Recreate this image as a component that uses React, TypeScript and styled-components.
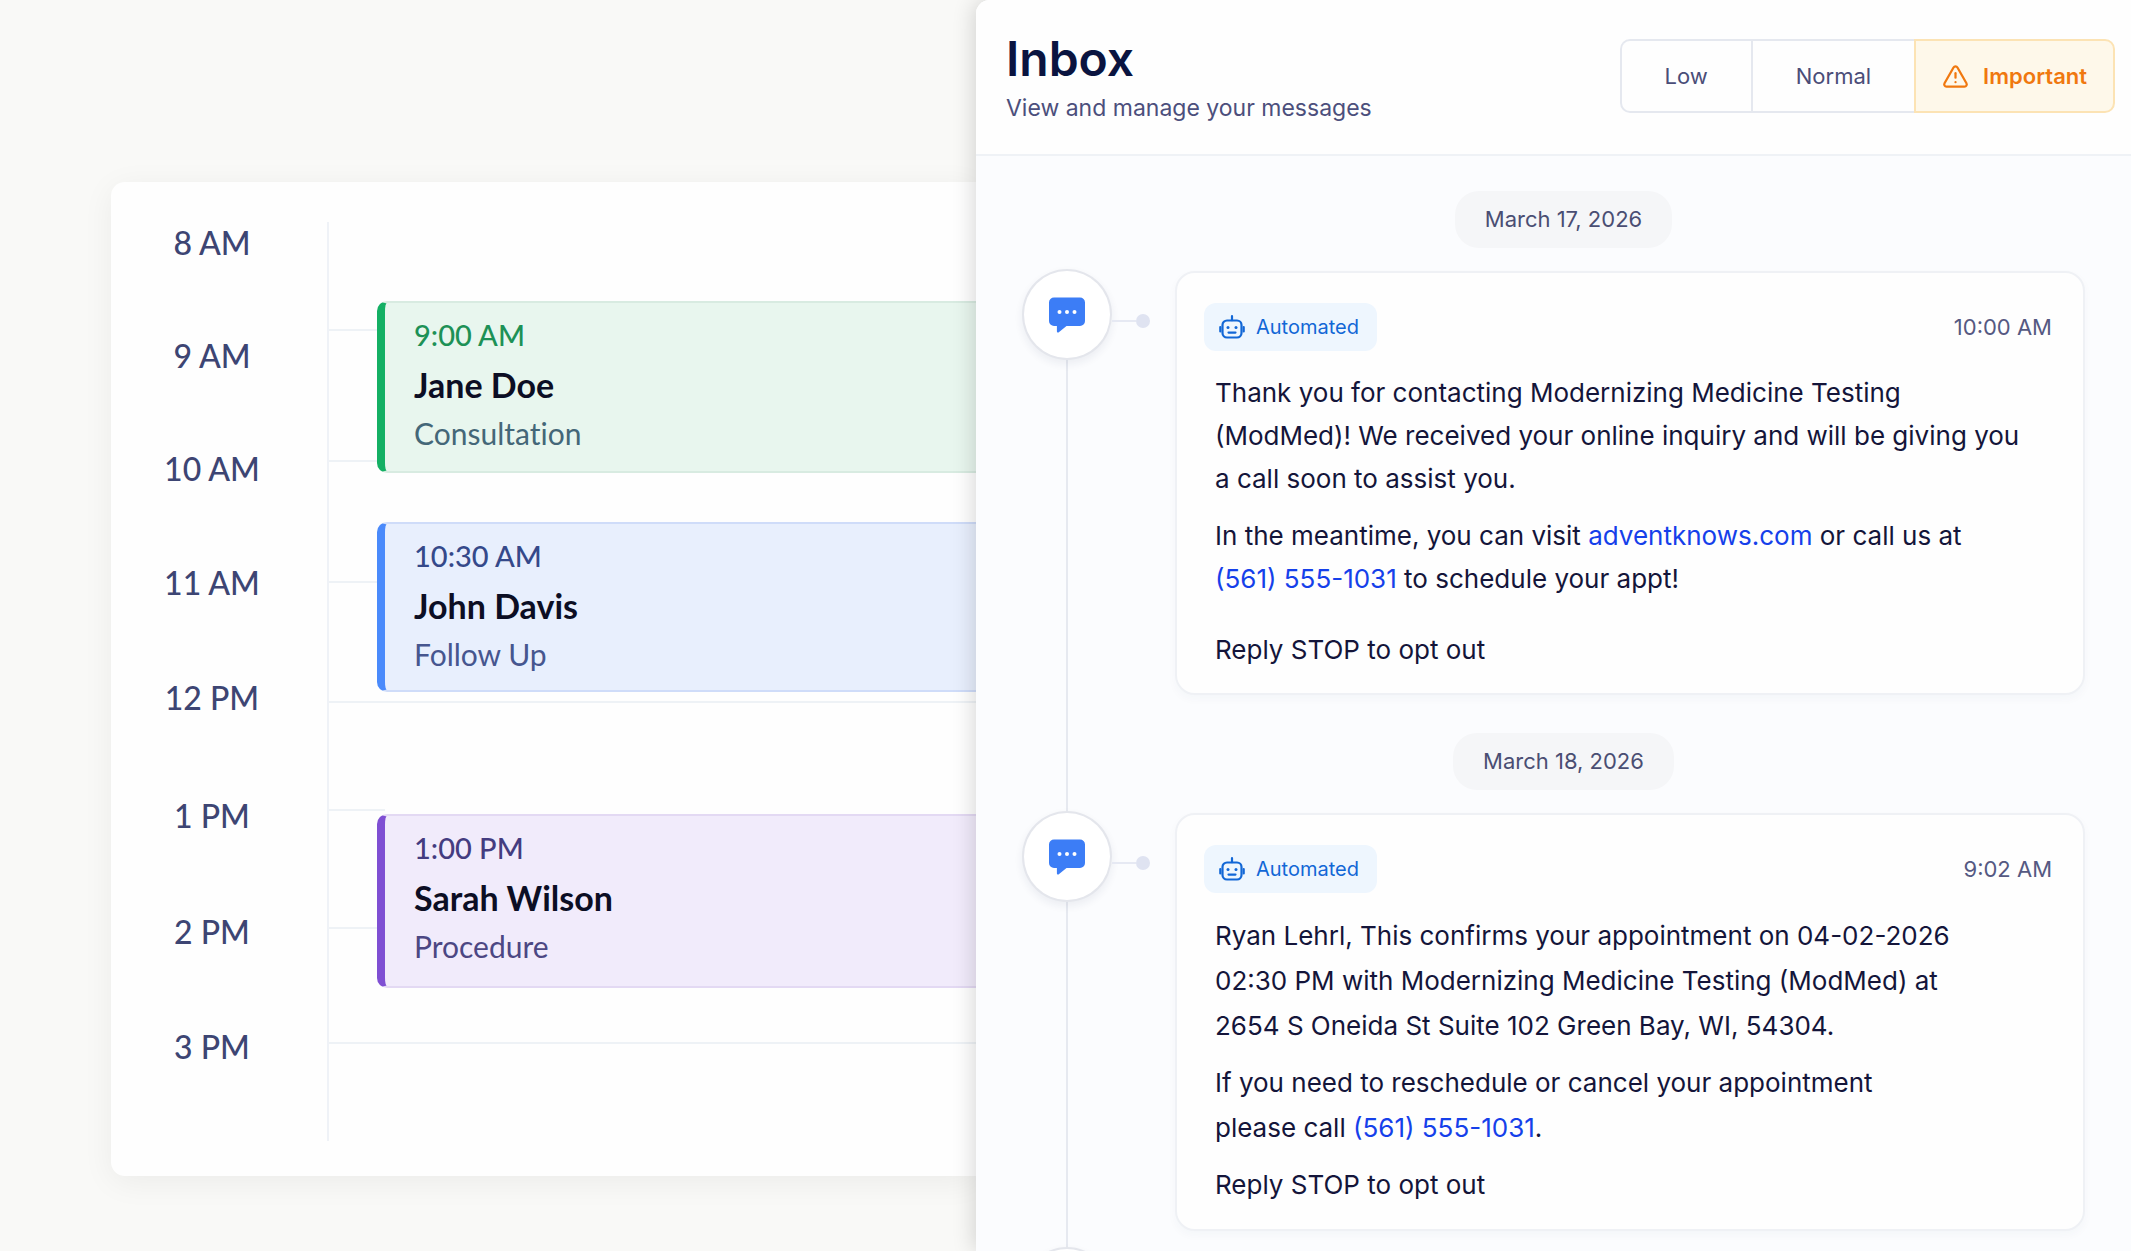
import React from "react";
import styled, { createGlobalStyle } from "styled-components";
import { TriangleAlert } from "lucide-react";

const GlobalStyle = createGlobalStyle`
  *, *::before, *::after { box-sizing: border-box; }
  body { margin: 0; background: #f9f9f7; }
  h1, h2, p, ol, ul { margin: 0; padding: 0; }
  ol, ul { list-style: none; }
`;

const Page = styled.main`
  display: grid;
  grid-template-columns: 45.8% 1fr;
  height: 100vh;
  overflow: hidden;
  background: #f9f9f7;
  font-family: Inter, "Liberation Sans", sans-serif;
`;

/* ---------- Calendar ---------- */

const CalendarPane = styled.section`
  padding: 182px 0 75px 111px;
  font-family: Lato, "Liberation Sans", sans-serif;
  font-variant-ligatures: none;
`;

const CalendarCard = styled.div`
  display: grid;
  grid-template-columns: 216px 1fr;
  padding: 40px 0 35px;
  background: #fefefe;
  border-radius: 14px 0 0 14px;
  box-shadow: 0 6px 32px rgba(20, 20, 20, 0.06);
`;

const HourList = styled.ol`
  padding-right: 14px;
`;

const HourLabel = styled.li<{ $height: number }>`
  height: ${(p) => p.$height}px;
  font-size: 32px;
  line-height: 42px;
  font-weight: 500;
  text-align: center;
  color: #3d4573;
`;

const DayTrack = styled.div`
  display: grid;
  border-left: 2px solid #eff2f7;
`;

const SlotColumn = styled.div`
  grid-area: 1 / 1;
`;

const Slot = styled.div<{ $height: number }>`
  display: flex;
  align-items: flex-end;
  height: ${(p) => p.$height}px;
`;

const SlotRule = styled.div<{ $short?: boolean }>`
  width: ${(p) => (p.$short ? "56px" : "100%")};
  height: 2px;
  background: #eef2f6;
`;

const EventColumn = styled.div`
  grid-area: 1 / 1;
  padding: 79px 0 0 48px;
`;

type Tone = "green" | "blue" | "purple";

const tones: Record<Tone, { bg: string; edge: string; bar: string; time: string; note: string }> = {
  green: { bg: "#e8f6ee", edge: "#d8ebe1", bar: "#14b064", time: "#1d9156", note: "#446778" },
  blue: { bg: "#e8effd", edge: "#cfdcf9", bar: "#4a8afb", time: "#35498a", note: "#46568f" },
  purple: { bg: "#f1ebfb", edge: "#e3d9f3", bar: "#7f4fd3", time: "#443c80", note: "#4c4783" },
};

const EventCard = styled.article<{ $tone: Tone; $height: number; $gap: number }>`
  height: ${(p) => p.$height}px;
  margin-bottom: ${(p) => p.$gap}px;
  padding: 13px 0 0 29px;
  border: 2px solid ${(p) => tones[p.$tone].edge};
  border-left: 8px solid ${(p) => tones[p.$tone].bar};
  border-right: 0;
  border-radius: 10px 0 0 10px;
  background: ${(p) => tones[p.$tone].bg};
`;

const EventTime = styled.p<{ $tone: Tone }>`
  font-size: 29px;
  line-height: 38px;
  font-weight: 500;
  color: ${(p) => tones[p.$tone].time};
`;

const EventName = styled.h2`
  font-size: 34px;
  line-height: 62px;
  font-weight: 700;
  color: #0c0e24;
`;

const EventNote = styled.p<{ $tone: Tone }>`
  font-size: 30px;
  line-height: 35px;
  color: ${(p) => tones[p.$tone].note};
`;

/* ---------- Inbox ---------- */

const InboxPanel = styled.section`
  position: relative;
  display: flex;
  flex-direction: column;
  min-width: 0;
  overflow: hidden;
  border-radius: 14px 0 0 0;
  background: #fbfcfe;
`;

const PanelShadow = styled.div`
  display: grid;
  min-height: 0;
  border-radius: 14px 0 0 0;
  box-shadow: -2px 0 22px rgba(0, 0, 0, 0.16);
`;

const PanelHeader = styled.header`
  display: flex;
  align-items: center;
  justify-content: space-between;
  padding: 28px 16px 30px 30px;
  border-bottom: 2px solid #eff2f6;
  background: #fefefe;
`;

const Title = styled.h1`
  font-size: 48px;
  line-height: 62px;
  font-weight: 600;
  color: #0a1440;
`;

const Subtitle = styled.p`
  margin-top: 2px;
  font-size: 23px;
  line-height: 32px;
  color: #4c4f7c;
`;

const Segments = styled.div`
  display: flex;
  height: 74px;
`;

const Segment = styled.button<{ $active?: boolean }>`
  display: flex;
  align-items: center;
  justify-content: center;
  gap: 14px;
  padding: 0 ${(p) => (p.$active ? 26 : 43)}px;
  border: 2px solid ${(p) => (p.$active ? "#fce3b4" : "#e5e8ef")};
  border-right-width: ${(p) => (p.$active ? 2 : 0)}px;
  background: ${(p) => (p.$active ? "#fef8ea" : "#fefefe")};
  color: ${(p) => (p.$active ? "#f0780f" : "#4a4d78")};
  font-family: inherit;
  font-size: 22px;
  font-weight: ${(p) => (p.$active ? 600 : 400)};
  cursor: pointer;

  &:first-child { border-radius: 10px 0 0 10px; }
  &:last-child { border-radius: 0 10px 10px 0; }
`;

const Thread = styled.div`
  position: relative;
  flex: 1;
  min-height: 0;
  padding: 35px 46px 0;

  &::before {
    content: "";
    position: absolute;
    top: 160px;
    bottom: 0;
    left: 90px;
    width: 2px;
    background: #e6e9f0;
  }
`;

const DateRow = styled.div`
  display: flex;
  justify-content: center;
  padding-left: 20px;
  margin-bottom: 23px;
`;

const DatePill = styled.time`
  padding: 0 30px;
  border-radius: 24px;
  background: #f5f6f8;
  font-size: 22px;
  line-height: 57px;
  color: #4a4e73;
`;

const MessageRow = styled.article`
  position: relative;
  display: grid;
  grid-template-columns: 128px 1fr;
  column-gap: 25px;
  margin-bottom: 38px;

  &:nth-last-child(2) { margin-bottom: 18px; }
`;

const Marker = styled.div`
  display: flex;
  margin-top: -2px;
`;

const MarkerDisc = styled.div`
  display: grid;
  place-items: center;
  flex: none;
  width: 90px;
  height: 91px;
  border: 2px solid #e4e6ec;
  border-radius: 50%;
  background: #fff;
  box-shadow: 0 4px 8px rgba(30, 40, 90, 0.07);
`;

const Connector = styled.div`
  display: flex;
  align-items: center;
  flex: 1;
  height: 104px;

  &::before { content: ""; flex: 1; height: 2px; background: #e6e9f3; }
  &::after { content: ""; width: 14px; height: 14px; border-radius: 50%; background: #dfe3f1; }
`;

const MessageCard = styled.div`
  padding: 30px 31px 22px 27px;
  border: 2px solid #eff1f5;
  border-radius: 20px;
  background: #fefefe;
  box-shadow: 0 4px 10px rgba(30, 50, 100, 0.03);
`;

const MessageHead = styled.div`
  display: flex;
  align-items: center;
  justify-content: space-between;
  margin-bottom: 20px;
`;

const Badge = styled.span`
  display: flex;
  align-items: center;
  gap: 11px;
  height: 48px;
  padding: 0 18px 0 15px;
  border-radius: 12px;
  background: #eef6fe;
  color: #1267d6;
  font-size: 20px;
`;

const SentAt = styled.time`
  font-size: 22px;
  color: #555982;
`;

const Copy = styled.div<{ $leading: number }>`
  padding-left: 11px;
  font-size: 26px;
  line-height: ${(p) => p.$leading}px;
  color: #14153a;
`;

const Paragraph = styled.p<{ $gap?: number }>`
  margin-top: ${(p) => p.$gap ?? 0}px;
`;

const TextLink = styled.a`
  color: #1540ea;
  text-decoration: none;
`;

function ChatIcon() {
  return (
    <svg width="36" height="36" viewBox="0 0 36 36" aria-hidden="true">
      <path
        d="M5 0.5h26a5 5 0 0 1 5 5v18.500a5 5 0 0 1-5 5H17.500L9.500 35.400a1 1 0 0 1-1.600-.8V29H5a5 5 0 0 1-5-5V5.500a5 5 0 0 1 5-5Z"
        fill="#3c7df6"
      />
      <circle cx="10.500" cy="15" r="2" fill="#fff" />
      <circle cx="18" cy="15" r="2" fill="#fff" />
      <circle cx="25.500" cy="15" r="2" fill="#fff" />
    </svg>
  );
}

function RobotIcon() {
  return (
    <svg width="26" height="24" viewBox="0 0 26 24" fill="none" stroke="currentColor" strokeWidth="2.200" strokeLinecap="round" aria-hidden="true">
      <rect x="3.500" y="5.500" width="19" height="17" rx="4.500" />
      <path d="M13 1.200v4M1.300 12v4.500M24.700 12v4.500M9.500 17.600h7" />
      <circle cx="9" cy="12.600" r="1.500" fill="currentColor" stroke="none" />
      <circle cx="17" cy="12.600" r="1.500" fill="currentColor" stroke="none" />
    </svg>
  );
}

const hours = [
  { label: "8 AM", height: 113 },
  { label: "9 AM", height: 113 },
  { label: "10 AM", height: 114 },
  { label: "11 AM", height: 115 },
  { label: "12 PM", height: 118 },
  { label: "1 PM", height: 116 },
  { label: "2 PM", height: 115 },
  { label: "3 PM", height: 115 },
];

const slots = [
  { height: 109 },
  { height: 131 },
  { height: 121 },
  { height: 120 },
  { height: 108, short: true },
  { height: 118 },
  { height: 115 },
];

const events: { time: string; name: string; note: string; tone: Tone; height: number; gap: number }[] = [
  { time: "9:00 AM", name: "Jane Doe", note: "Consultation", tone: "green", height: 172, gap: 49 },
  { time: "10:30 AM", name: "John Davis", note: "Follow Up", tone: "blue", height: 170, gap: 122 },
  { time: "1:00 PM", name: "Sarah Wilson", note: "Procedure", tone: "purple", height: 174, gap: 0 },
];

function MessageMarker({ linked }: { linked?: boolean }) {
  return (
    <Marker>
      <MarkerDisc>
        <ChatIcon />
      </MarkerDisc>
      {linked && <Connector />}
    </Marker>
  );
}

function Message({ time, leading, children }: { time: string; leading: number; children: React.ReactNode }) {
  return (
    <MessageRow>
      <MessageMarker linked />
      <MessageCard>
        <MessageHead>
          <Badge>
            <RobotIcon />
            Automated
          </Badge>
          <SentAt>{time}</SentAt>
        </MessageHead>
        <Copy $leading={leading}>{children}</Copy>
      </MessageCard>
    </MessageRow>
  );
}

export default function App() {
  return (
    <Page>
      <GlobalStyle />
      <CalendarPane>
        <CalendarCard>
          <HourList>
            {hours.map((h) => (
              <HourLabel key={h.label} $height={h.height}>
                {h.label}
              </HourLabel>
            ))}
          </HourList>
          <DayTrack>
            <SlotColumn>
              {slots.map((s, i) => (
                <Slot key={i} $height={s.height}>
                  <SlotRule $short={s.short} />
                </Slot>
              ))}
            </SlotColumn>
            <EventColumn>
              {events.map((e) => (
                <EventCard key={e.name} $tone={e.tone} $height={e.height} $gap={e.gap}>
                  <EventTime $tone={e.tone}>{e.time}</EventTime>
                  <EventName>{e.name}</EventName>
                  <EventNote $tone={e.tone}>{e.note}</EventNote>
                </EventCard>
              ))}
            </EventColumn>
          </DayTrack>
        </CalendarCard>
      </CalendarPane>

      <PanelShadow>
        <InboxPanel>
          <PanelHeader>
            <div>
              <Title>Inbox</Title>
              <Subtitle>View and manage your messages</Subtitle>
            </div>
            <Segments role="group" aria-label="Priority">
              <Segment type="button">Low</Segment>
              <Segment type="button">Normal</Segment>
              <Segment type="button" $active aria-pressed="true">
                <TriangleAlert size={27} strokeWidth={2} aria-hidden="true" />
                Important
              </Segment>
            </Segments>
          </PanelHeader>

          <Thread>
            <DateRow>
              <DatePill dateTime="2026-03-17">March 17, 2026</DatePill>
            </DateRow>
            <Message time="10:00 AM" leading={43}>
              <Paragraph>
                Thank you for contacting Modernizing Medicine Testing
                <br />
                (ModMed)! We received your online inquiry and will be giving you
                <br />a call soon to assist you.
              </Paragraph>
              <Paragraph $gap={14}>
                In the meantime, you can visit <TextLink href="#site">adventknows.com</TextLink> or call us at
                <br />
                <TextLink href="tel:+15615551031">(561) 555-1031</TextLink> to schedule your appt!
              </Paragraph>
              <Paragraph $gap={28}>Reply STOP to opt out</Paragraph>
            </Message>

            <DateRow>
              <DatePill dateTime="2026-03-18">March 18, 2026</DatePill>
            </DateRow>
            <Message time="9:02 AM" leading={45}>
              <Paragraph>
                Ryan Lehrl, This confirms your appointment on 04-02-2026
                <br />
                02:30 PM with Modernizing Medicine Testing (ModMed) at
                <br />
                2654 S Oneida St Suite 102 Green Bay, WI, 54304.
              </Paragraph>
              <Paragraph $gap={12}>
                If you need to reschedule or cancel your appointment
                <br />
                please call <TextLink href="tel:+15615551031">(561) 555-1031</TextLink>.
              </Paragraph>
              <Paragraph $gap={12}>Reply STOP to opt out</Paragraph>
            </Message>

            <MessageRow>
              <MessageMarker />
            </MessageRow>
          </Thread>
        </InboxPanel>
      </PanelShadow>
    </Page>
  );
}
